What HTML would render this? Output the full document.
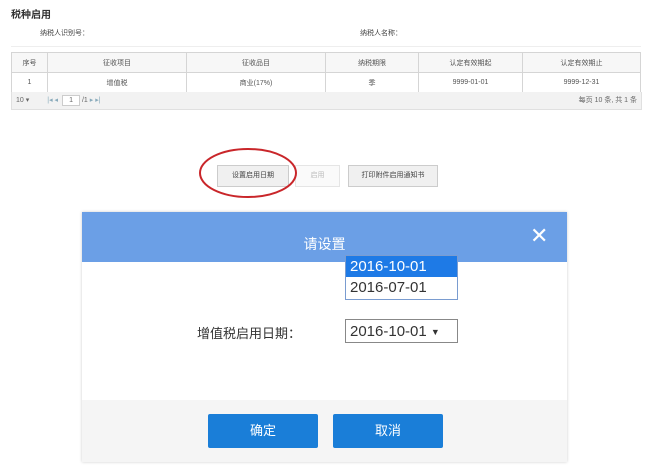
<!DOCTYPE html>
<html><head><meta charset="utf-8"><style>
body{margin:0;width:654px;height:476px;background:#fff;position:relative;overflow:hidden;font-family:"Liberation Sans","Noto Sans CJK SC",sans-serif;color:#333}
.a{position:absolute}
table{border-collapse:collapse;font-size:7px;color:#555}
td{border:1px solid #d5d5d5;text-align:center;height:19px;padding:0}
.btn{position:absolute;border:1px solid #ccc;background:#f0f0f0;font-size:7px;color:#444;text-align:center;line-height:20px;height:20px}
</style></head><body>
<div class="a" style="left:11px;top:6px;font-size:10px;font-weight:bold;color:#333">税种启用</div>
<div class="a" style="left:40px;top:28px;font-size:7px;color:#444">纳税人识别号：</div>
<div class="a" style="left:360px;top:28px;font-size:7px;color:#444">纳税人名称：</div>
<div class="a" style="left:11px;top:46px;width:630px;height:1px;background:#eee"></div>
<table class="a" style="left:11px;top:52px;width:630px">
<tr style="background:#f7f7f7"><td style="width:35px">序号</td><td style="width:138px">征收项目</td><td style="width:138px">征收品目</td><td style="width:92px">纳税期限</td><td style="width:103px">认定有效期起</td><td>认定有效期止</td></tr>
<tr><td>1</td><td>增值税</td><td>商业(17%)</td><td>季</td><td>9999-01-01</td><td>9999-12-31</td></tr>
</table>
<div class="a" style="left:11px;top:92px;width:629px;height:17px;background:#f2f2f2;border:1px solid #e0e0e0;border-top:0;font-size:7px;line-height:17px;color:#666">
<span style="margin-left:4px">10 ▾</span><span style="margin-left:18px;color:#8ab">|◂ ◂</span><span style="display:inline-block;width:16px;height:9px;background:#fff;border:1px solid #ccc;line-height:9px;margin-left:4px;text-align:center">1</span> /1 <span style="color:#8ab">▸ ▸|</span>
<span style="float:right;margin-right:4px">每页 10 条, 共 1 条</span></div>
<div class="btn" style="left:217px;top:165px;width:70px">设置启用日期</div>
<div class="btn" style="left:295px;top:165px;width:43px;color:#bbb;background:#fafafa;border-color:#e5e5e5">启用</div>
<div class="btn" style="left:348px;top:165px;width:88px">打印附件启用通知书</div>
<svg class="a" style="left:195px;top:145px" width="110" height="56"><ellipse cx="53" cy="28" rx="48" ry="24" fill="none" stroke="#c9262a" stroke-width="2"/></svg>
<div class="a" style="left:82px;top:212px;width:485px;height:250px;background:#fff;box-shadow:0 0 3px rgba(0,0,0,.2)">
<div class="a" style="left:0;top:0;width:485px;height:50px;background:#6b9fe6"></div>
<div class="a" style="left:0;top:22px;width:485px;text-align:center;font-size:14px;color:#fff">请设置</div>
<div class="a" style="left:448px;top:13px;font-size:22px;color:#fff;line-height:22px">✕</div>
<div class="a" style="left:0;top:188px;width:485px;height:62px;background:#f5f5f5"></div>
<div class="a" style="left:115px;top:111px;font-size:13px;color:#333">增值税启用日期：</div>
<div class="a" style="left:263px;top:107px;width:111px;height:24px;border:1px solid #888;font-size:15px;line-height:24px;padding-left:4px;box-sizing:border-box;width:113px">2016-10-01 <span style="font-size:9px;vertical-align:top">▼</span></div>
<div class="a" style="left:263px;top:43px;width:111px;height:43px;border:1px solid #7a9cd0;background:#fff;font-size:15px;line-height:21px">
<div style="background:#1e7ae6;color:#fff;padding-left:4px">2016-10-01</div><div style="padding-left:4px">2016-07-01</div></div>
<div class="a" style="left:126px;top:202px;width:110px;height:34px;background:#1a7ed8;border-radius:2px;color:#fff;font-size:13px;line-height:34px;text-align:center">确定</div>
<div class="a" style="left:251px;top:202px;width:110px;height:34px;background:#1a7ed8;border-radius:2px;color:#fff;font-size:13px;line-height:34px;text-align:center">取消</div>
</div>
</body></html>
